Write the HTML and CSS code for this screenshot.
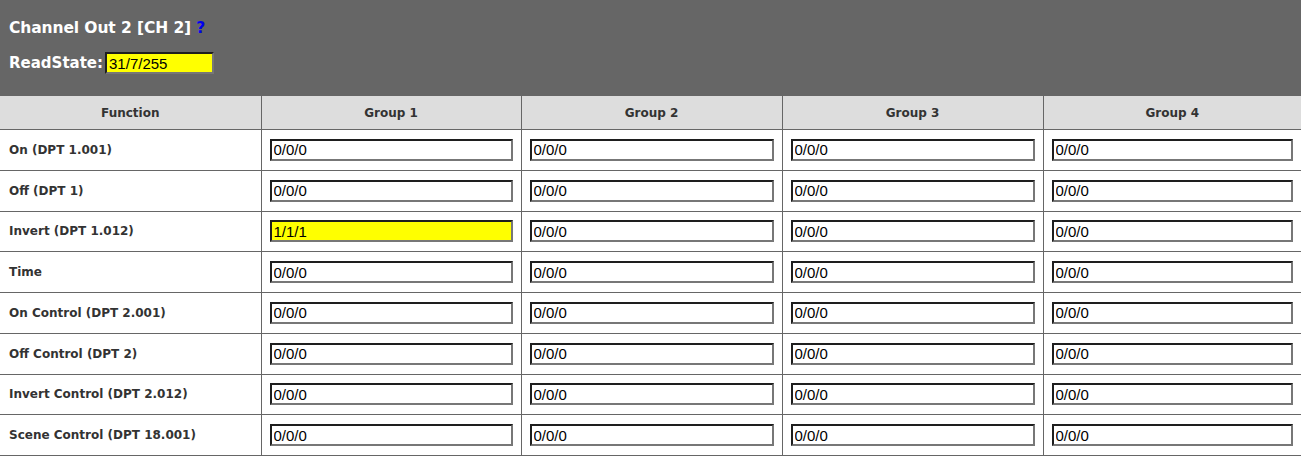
FILE: index.html
```html
<!DOCTYPE html>
<html>
<head>
<meta charset="utf-8">
<link rel="stylesheet" href="styles.css">
</head>
<body>
<div class="top">
  <div class="title">Channel Out 2 [CH 2] <span class="help">?</span></div>
  <div class="readstate"><span class="rs-label">ReadState:</span><input class="field hl rs-input" type="text" value="31/7/255"></div>
</div>
<table class="grid">
  <colgroup>
    <col class="c-func"><col class="c-g"><col class="c-g2"><col class="c-g2"><col>
  </colgroup>
  <thead>
    <tr><th>Function</th><th>Group 1</th><th>Group 2</th><th>Group 3</th><th>Group 4</th></tr>
  </thead>
  <tbody>
    <tr><td class="lbl">On (DPT 1.001)</td><td><input class="field" value="0/0/0"></td><td><input class="field" value="0/0/0"></td><td><input class="field" value="0/0/0"></td><td><input class="field" value="0/0/0"></td></tr>
    <tr><td class="lbl">Off (DPT 1)</td><td><input class="field" value="0/0/0"></td><td><input class="field" value="0/0/0"></td><td><input class="field" value="0/0/0"></td><td><input class="field" value="0/0/0"></td></tr>
    <tr><td class="lbl">Invert (DPT 1.012)</td><td><input class="field hl" value="1/1/1"></td><td><input class="field" value="0/0/0"></td><td><input class="field" value="0/0/0"></td><td><input class="field" value="0/0/0"></td></tr>
    <tr><td class="lbl">Time</td><td><input class="field" value="0/0/0"></td><td><input class="field" value="0/0/0"></td><td><input class="field" value="0/0/0"></td><td><input class="field" value="0/0/0"></td></tr>
    <tr><td class="lbl">On Control (DPT 2.001)</td><td><input class="field" value="0/0/0"></td><td><input class="field" value="0/0/0"></td><td><input class="field" value="0/0/0"></td><td><input class="field" value="0/0/0"></td></tr>
    <tr><td class="lbl">Off Control (DPT 2)</td><td><input class="field" value="0/0/0"></td><td><input class="field" value="0/0/0"></td><td><input class="field" value="0/0/0"></td><td><input class="field" value="0/0/0"></td></tr>
    <tr><td class="lbl">Invert Control (DPT 2.012)</td><td><input class="field" value="0/0/0"></td><td><input class="field" value="0/0/0"></td><td><input class="field" value="0/0/0"></td><td><input class="field" value="0/0/0"></td></tr>
    <tr><td class="lbl">Scene Control (DPT 18.001)</td><td><input class="field" value="0/0/0"></td><td><input class="field" value="0/0/0"></td><td><input class="field" value="0/0/0"></td><td><input class="field" value="0/0/0"></td></tr>
  </tbody>
</table>
</body>
</html>
```
FILE: styles.css
```css
html, body {
  margin: 0;
  padding: 0;
  background: #fff;
}
body {
  font-family: "DejaVu Sans", Verdana, sans-serif;
  color: #333;
}
.top {
  background: #666;
  height: 96px;
  box-sizing: border-box;
  padding: 19px 0 0 9px;
  color: #fff;
}
.title {
  font-weight: bold;
  font-size: 15.5px;
  line-height: 18px;
  letter-spacing: -0.1px;
}
.help {
  color: #0000ee;
}
.readstate {
  margin-top: 15px;
  display: flex;
  align-items: center;
  font-weight: bold;
  font-size: 15px;
}
.rs-label {
  margin-right: 2px;
}
.field {
  display: block;
  box-sizing: border-box;
  width: 100%;
  height: 22px;
  margin: 0;
  padding: 0 2px;
  border: 2px solid;
  border-color: #1e1e1e #777 #777 #1e1e1e;
  background: #fff;
  font-family: "Liberation Sans", Arial, sans-serif;
  font-size: 15px;
  color: #000;
  outline: none;
}
.hl {
  background: #ffff00;
}
.rs-input {
  width: 109px;
}
.grid {
  width: 100%;
  border-collapse: collapse;
  table-layout: fixed;
  font-size: 12px;
}
.c-func {
  width: 261px;
}
.c-g {
  width: 260px;
}
.c-g2 {
  width: 261px;
}
.grid th {
  background: #dddddd;
  color: #333;
  font-weight: bold;
  height: 33px;
  padding: 0;
  border-left: 1px solid #666;
  border-bottom: 1px solid #666;
  text-align: center;
}
.grid td {
  padding: 8.875px 8px 8.875px 8px;
  border-left: 1px solid #666;
  border-bottom: 1px solid #666;
}
.grid th:first-child, .grid td:first-child {
  border-left: none;
}
.grid td.lbl {
  font-weight: bold;
  padding-left: 9px;
  padding-right: 4px;
  color: #333;
}
```
